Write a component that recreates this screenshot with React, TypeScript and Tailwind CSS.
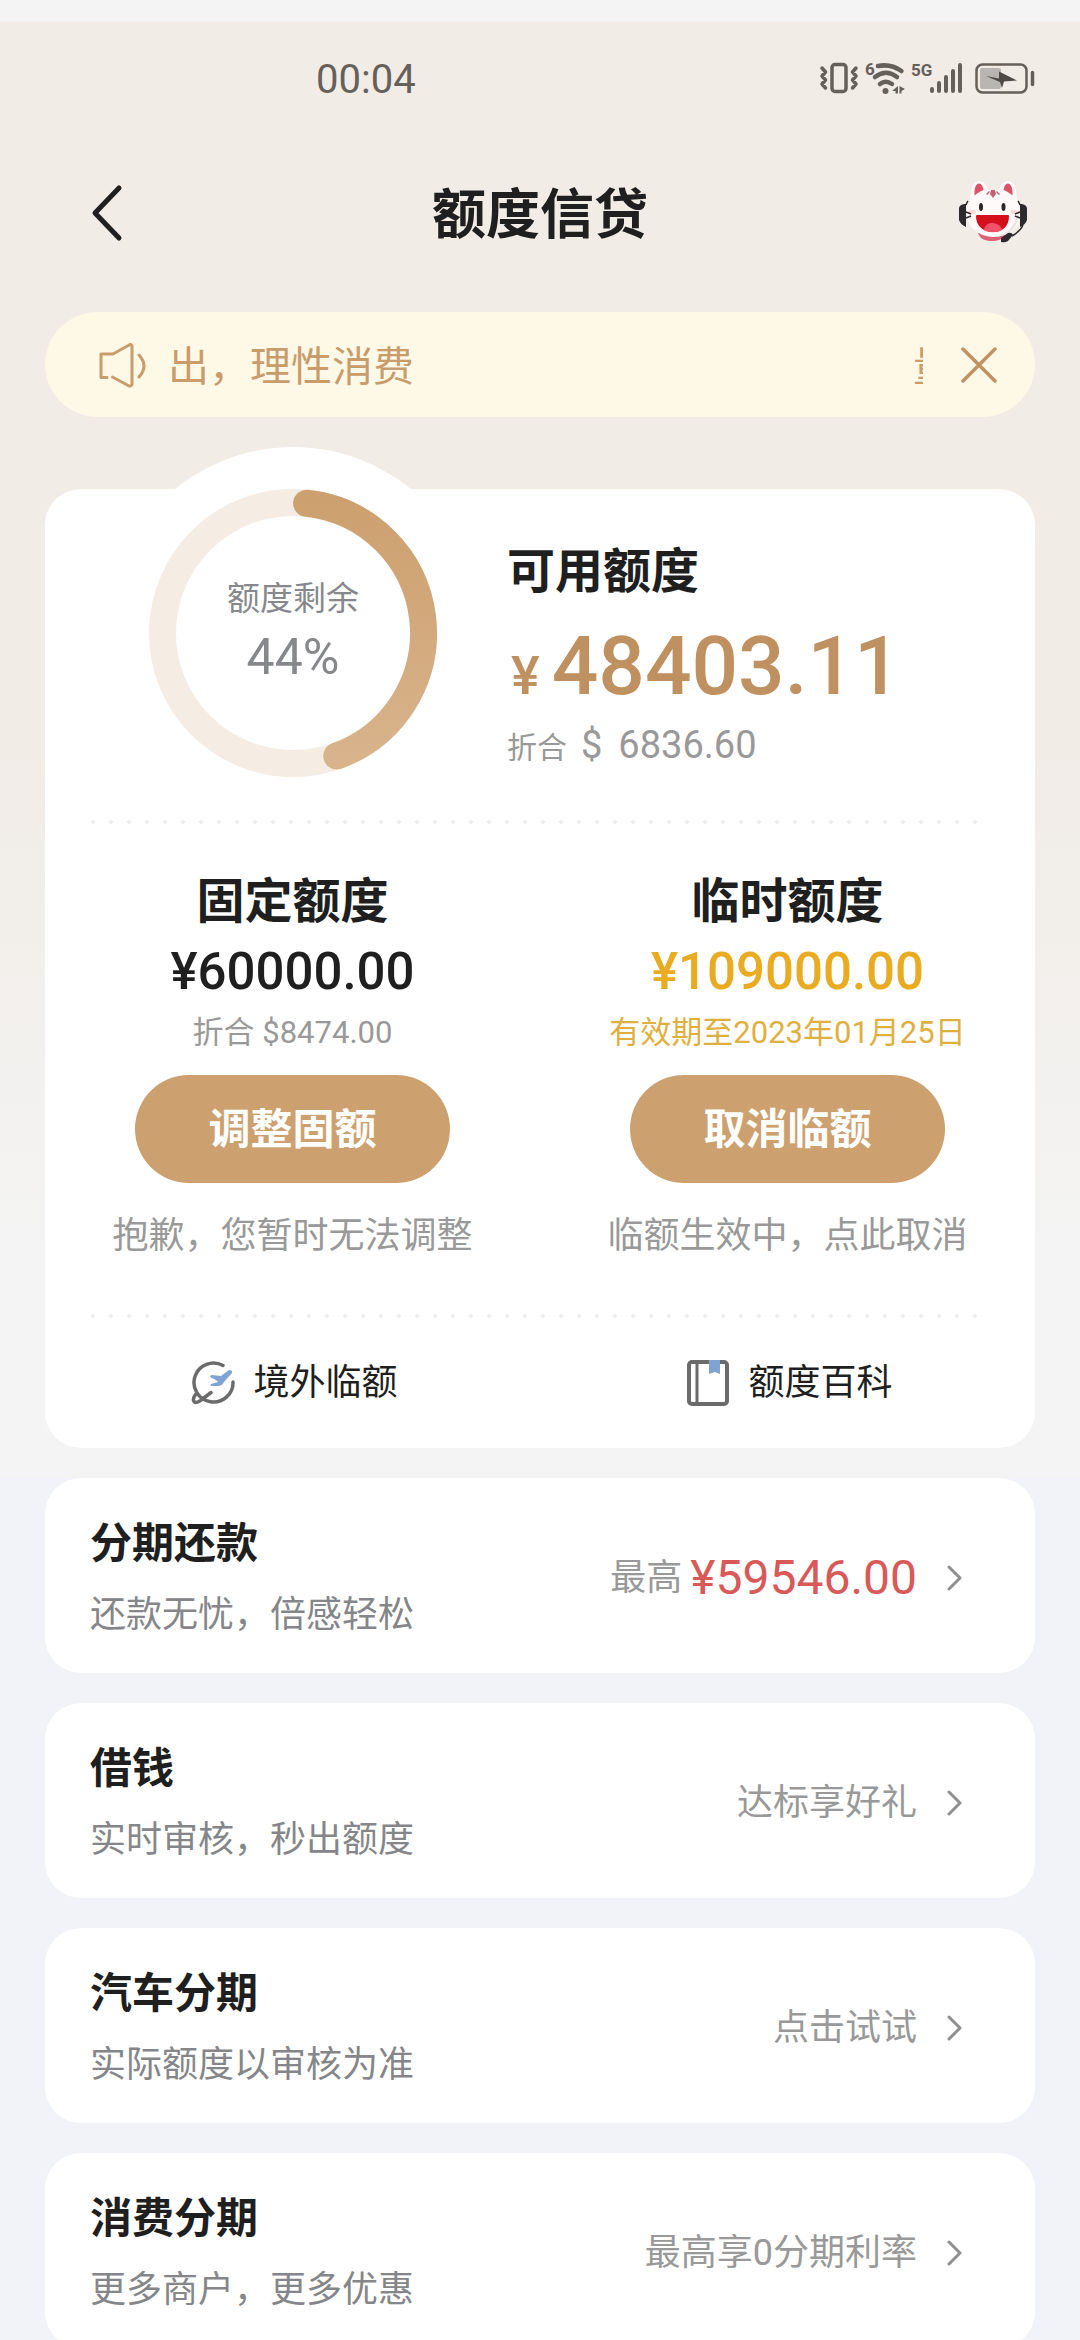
import { type ReactNode } from "react";

interface ServiceItem {
  title: string;
  desc: string;
  hint: string;
  amount?: string;
}

const services: ServiceItem[] = [
  { title: "分期还款", desc: "还款无忧，倍感轻松", hint: "最高", amount: "¥59546.00" },
  { title: "借钱", desc: "实时审核，秒出额度", hint: "达标享好礼" },
  { title: "汽车分期", desc: "实际额度以审核为准", hint: "点击试试" },
  { title: "消费分期", desc: "更多商户，更多优惠", hint: "最高享0分期利率" },
];

const StatusIcons = () => (
  <svg width="218" height="36" viewBox="0 0 218 36" fill="none" stroke="#66605a" aria-hidden="true">
    <rect x="14" y="4.5" width="14" height="27" rx="3" strokeWidth="3.5" />
    <path
      d="M4 8l3.5 4-3.500 4 3.500 4-3.500 4 3.500 4M38 8l-3.500 4 3.500 4-3.500 4 3.500 4-3.500 4"
      strokeWidth="3.5"
      strokeLinejoin="round"
      strokeLinecap="round"
    />
    <text x="47" y="15" fontSize="17" fontWeight="700" fill="#66605a" stroke="none">
      6
    </text>
    <path
      d="M60 6Q73 3.500 83.500 11M57 17Q68 8.500 79 17M62 24Q67.500 19.500 74 24"
      strokeWidth="4.500"
      strokeLinecap="round"
    />
    <circle cx="67.500" cy="31" r="3" fill="#66605a" stroke="none" />
    <path d="M74 31l6-5v7.500h-2.500v-2.500zM87 29l-5.500-3v7.500h2v-2.500z" fill="#66605a" stroke="none" />
    <text x="93" y="16" fontSize="17" fontWeight="700" fill="#66605a" stroke="none">
      5G
    </text>
    <path d="M114 29v2M121 23v8M128 17v14M135 11v20M142 5v26" strokeWidth="4" strokeLinecap="round" />
    <rect x="158.500" y="4.500" width="50" height="28" rx="6" strokeWidth="2.500" />
    <rect x="162" y="8" width="21" height="21" rx="2" fill="#b9b5b0" stroke="none" />
    <path d="M168 16l13 2.500v-7L199 20.500l-13 1-2 6.500-2-6z" fill="#4f4a46" stroke="none" />
    <path d="M214.500 12.500v12" strokeWidth="3.500" strokeLinecap="round" />
  </svg>
);

const MascotIcon = () => (
  <svg width="72" height="64" viewBox="0 0 72 64" aria-hidden="true">
    <path d="M13 20C13 8 16 0 22 0c5 0 8 4 9 9h11c1-5 4-9 9-9 6 0 9 8 9 20z" fill="#fffafa" />
    <path
      d="M17.500 12c0-6 2-9.500 4.500-9.500s4 3 4.500 6.500c-3 1-6 3-9 5.500zM55.500 12c0-6-2-9.500-4.500-9.500s-4 3-4.500 6.500c3 1 6 3 9 5.500z"
      fill="#dc5468"
    />
    <path d="M21 52h28c-2 6-7 8-14 8s-12-2-14-8z" fill="#dd6075" />
    <ellipse cx="36.500" cy="32.500" rx="27" ry="23.500" fill="#fffafa" />
    <path d="M62 26c2 15-6 29-25 30 14-2 22-12 25-30z" fill="#eee3e3" />
    <path d="M34 9h4l1 4-3 4-3-4zM29 13l3-3 1 1-3 3zM43 13l-3-3-1 1 3 3z" fill="#c9607a" />
    <ellipse cx="15" cy="31" rx="4" ry="2" fill="#fbdada" />
    <ellipse cx="57" cy="31" rx="4" ry="2" fill="#fbdada" />
    <ellipse cx="24" cy="26" rx="2" ry="4" fill="#2a2528" />
    <ellipse cx="46.500" cy="26" rx="2" ry="4" fill="#2a2528" />
    <path d="M19 35q0-1 1-1h31q1 0 1 1c0 10-6 16-16 16s-17-6-17-16z" fill="#d60f1d" />
    <path d="M27 49c1-5 4-7 8-7s9 2 10 7c-5 3-13 3-18 0z" fill="#f0526a" />
    <path d="M9 23c-4 0-6 1-7 4v12c1 3 3 5 7 7zM63 23c4 0 6 1 7 4v12c-1 3-3 5-7 7z" fill="#2c2a2d" />
    <path
      d="M9 24c1-2 1-3 2-4M63 24c-1-2-1-3-2-4M9 31l5 2M9 37l5-2M63 31l-5 2M63 37l-5-2M66 44c-2 5-6 8-11 11"
      stroke="#2c2a2d"
      strokeWidth="1.500"
      fill="none"
    />
    <path d="M44 57l7-5q4-1 5 2l-5 6q-3 2-7 1z" fill="#2c2a2d" />
  </svg>
);

const SpeakerIcon = () => (
  <svg
    width="48"
    height="46"
    viewBox="0 0 48 46"
    fill="none"
    stroke="#c99c6c"
    strokeWidth="3"
    strokeLinecap="round"
    strokeLinejoin="round"
    aria-hidden="true"
  >
    <path d="M8 35.500H2V12h12L31 2.500q2 0 2 2v37q0 3-3 2.500L13.500 35" />
    <path d="M40 13q10 11 0 22" />
  </svg>
);

const OverseasIcon = () => (
  <svg width="44" height="44" viewBox="0 0 44 44" fill="none" aria-hidden="true">
    <path
      d="M32 4.500A19.500 19.500 0 1 0 42 21M6 32c-2 2-4 5-3.500 7.500 1 3 4 2 7 0L20 31.500"
      stroke="#6b6b6b"
      strokeWidth="3.500"
      strokeLinecap="round"
    />
    <path d="M38 9q4 0 3 3L33 21q-2 4-6 4h-7q-1-1 0-2l7-2-2-2-6-3q0-2 2-2l9 1z" fill="#7fa3d3" />
  </svg>
);

const BookIcon = () => (
  <svg width="44" height="46" viewBox="0 0 44 46" fill="none" aria-hidden="true">
    <rect x="3" y="2" width="38" height="42" rx="3" stroke="#6b6b6b" strokeWidth="4" />
    <path d="M11 3v40" stroke="#6b6b6b" strokeWidth="3" />
    <path d="M23 0h11v14l-5.500-2-5.500 2z" fill="#7fa3d3" />
  </svg>
);

const ChevronIcon = () => (
  <svg
    width="16"
    height="28"
    viewBox="0 0 16 28"
    fill="none"
    stroke="#8f8f8f"
    strokeWidth="3"
    strokeLinecap="round"
    strokeLinejoin="round"
    aria-hidden="true"
  >
    <path d="M2 3l11 11L2 25" />
  </svg>
);

const RING_RADIUS = 130.5;

const ringPoint = (deg: number) => {
  const rad = (deg * Math.PI) / 180;
  return `${144 + RING_RADIUS * Math.sin(rad)} ${144 - RING_RADIUS * Math.cos(rad)}`;
};

const QuotaRing = ({ percent }: { percent: number }) => (
  <div className="relative size-[288px] shrink-0">
    <div className="absolute -inset-[42px] rounded-full bg-white" />
    <svg className="absolute inset-0" viewBox="0 0 288 288" fill="none" aria-hidden="true">
      <defs>
        <linearGradient id="ring" x1="0" y1="0" x2="0" y2="1">
          <stop offset="0" stopColor="#cda06f" />
          <stop offset="1" stopColor="#d8b38b" />
        </linearGradient>
      </defs>
      <circle cx="144" cy="144" r={RING_RADIUS} stroke="#f5ece4" strokeWidth="27" />
      <path
        d={`M${ringPoint(6)}A${RING_RADIUS} ${RING_RADIUS} 0 0 1 ${ringPoint(percent * 3.6 + 2)}`}
        stroke="url(#ring)"
        strokeWidth="27"
        strokeLinecap="round"
      />
    </svg>
    <div className="relative flex h-full flex-col items-center justify-center pb-1 text-[#87888c]">
      <span className="text-[33px] leading-[48px]">额度剩余</span>
      <span className="mt-1 text-[50px] leading-[60px]">{percent}%</span>
    </div>
  </div>
);

const DottedLine = () => (
  <div className="mx-[45px] h-1 bg-[radial-gradient(circle_at_3px_2px,#eeeeee_2px,transparent_2px)] bg-[length:18px_4px]" />
);

interface QuotaColumnProps {
  title: string;
  amount: string;
  amountColor: string;
  note: ReactNode;
  noteColor: string;
  action: string;
  tip: string;
}

const QuotaColumn = ({ title, amount, amountColor, note, noteColor, action, tip }: QuotaColumnProps) => (
  <div className="flex flex-col items-center">
    <h2 className="text-[48px] leading-[60px] font-bold">{title}</h2>
    <p className={`mt-2 text-[51px] leading-[64px] font-medium ${amountColor}`}>{amount}</p>
    <p className={`mt-[9px] text-[31px] leading-[40px] ${noteColor}`}>{note}</p>
    <button className="mt-[22px] h-[108px] w-[315px] rounded-full bg-[#cca16f] text-[42px] font-bold text-white">
      {action}
    </button>
    <p className="mt-[27px] text-[36px] leading-[52px] text-[#999999]">{tip}</p>
  </div>
);

const ServiceCard = ({ title, desc, hint, amount }: ServiceItem) => (
  <a
    href="#"
    className="flex items-center justify-between rounded-[36px] bg-white pt-9 pr-[72px] pb-8 pl-[45px]"
  >
    <div className="flex flex-col gap-[15px]">
      <h3 className="text-[42px] leading-[60px] font-bold">{title}</h3>
      <p className="text-[36px] leading-[52px] text-[#858689]">{desc}</p>
    </div>
    <div className="flex items-center text-[36px] leading-[52px] text-[#999999]">
      <span>{hint}</span>
      {amount && <span className="ml-2 text-[48px] text-[#d95858]">{amount}</span>}
      <span className="ml-[30px]">
        <ChevronIcon />
      </span>
    </div>
  </a>
);

const App = () => {
  return (
    <div className="h-screen overflow-y-auto bg-[#f2f3f8] font-['Roboto','Noto_Sans_CJK_SC',sans-serif] text-[#1f1f1f] [scrollbar-width:none]">
      <div className="h-[22px] bg-[#f4f4f4]" />
      <div className="bg-linear-to-b from-[#f1ece6] from-50% to-[#f4f4f4] to-85% pb-[30px]">
        <div className="flex h-28 items-center justify-between pr-11 pl-[316px]">
          <span className="pt-1 text-[40px] text-[#66605a]">00:04</span>
          <StatusIcons />
        </div>

        <header className="grid h-[158px] grid-cols-[1fr_auto_1fr] items-center pr-[51px] pl-[90px]">
          <button aria-label="返回" className="justify-self-start">
            <svg
              width="34"
              height="58"
              viewBox="0 0 34 58"
              fill="none"
              stroke="#1f1f1f"
              strokeWidth="5"
              strokeLinecap="round"
              strokeLinejoin="round"
            >
              <path d="M29 4L5 29l24 25" />
            </svg>
          </button>
          {/* padding evens out the two unequal side insets */}
          <h1 className="pt-1 pr-[39px] text-[54px] font-bold">额度信贷</h1>
          <button aria-label="客服" className="justify-self-end">
            <MascotIcon />
          </button>
        </header>

        <div className="mx-[45px] mt-5 flex h-[105px] items-center rounded-full bg-[#fef8e7] pr-[38px] pl-[54px] text-[#c99c6c]">
          <SpeakerIcon />
          <div className="ml-[21px] flex min-w-0 flex-1 justify-between overflow-hidden pt-1 text-[41px] leading-[60px] whitespace-nowrap">
            <span>出，理性消费</span>
            {/* the next lap of the marquee is just entering here */}
            <span className="w-[10px] overflow-hidden">量</span>
          </div>
          <button aria-label="关闭" className="ml-[38px]">
            <svg width="36" height="36" viewBox="0 0 36 36" stroke="#c09263" strokeWidth="3.500" strokeLinecap="round">
              <path d="M2 2l32 32M34 2L2 34" />
            </svg>
          </button>
        </div>

        <main className="mx-[45px] mt-[72px] rounded-[36px] bg-white">
          <div className="flex h-[331px] gap-[70px] pl-[104px]">
            <QuotaRing percent={44} />
            <div className="pt-[53px]">
              <h2 className="text-[48px] leading-[60px] font-bold">可用额度</h2>
              <p className="mt-4 flex items-baseline font-medium text-[#bf9060]">
                <span className="ml-1 text-[54px] leading-none">¥</span>
                <span className="ml-3 text-[82px] leading-[96px]">48403.11</span>
              </p>
              <p className="mt-[7px] flex items-baseline text-[#999999]">
                <span className="text-[30px] leading-none">折合</span>
                <span className="ml-[14px] text-[38px] leading-[48px]">$</span>
                <span className="ml-4 text-[38px] leading-[48px]">6836.60</span>
              </p>
            </div>
          </div>

          <DottedLine />

          <div className="grid grid-cols-2 pt-12 pb-[52px]">
            <QuotaColumn
              title="固定额度"
              amount="¥60000.00"
              amountColor="text-[#1f1f1f]"
              note="折合 $8474.00"
              noteColor="text-[#999999]"
              action="调整固额"
              tip="抱歉，您暂时无法调整"
            />
            <QuotaColumn
              title="临时额度"
              amount="¥109000.00"
              amountColor="text-[#e9ab22]"
              note="有效期至2023年01月25日"
              noteColor="text-[#dfb03f]"
              action="取消临额"
              tip="临额生效中，点此取消"
            />
          </div>

          <DottedLine />

          <nav className="grid h-[130px] grid-cols-2 text-[36px]">
            <a href="#" className="flex items-center justify-center gap-[18px] pl-1">
              <OverseasIcon />
              境外临额
            </a>
            <a href="#" className="flex items-center justify-center gap-[18px] pl-1">
              <BookIcon />
              额度百科
            </a>
          </nav>
        </main>
      </div>

      <section className="flex flex-col gap-[30px] px-[45px]">
        {services.map((item) => (
          <ServiceCard key={item.title} {...item} />
        ))}
      </section>
    </div>
  );
};

export default App;
